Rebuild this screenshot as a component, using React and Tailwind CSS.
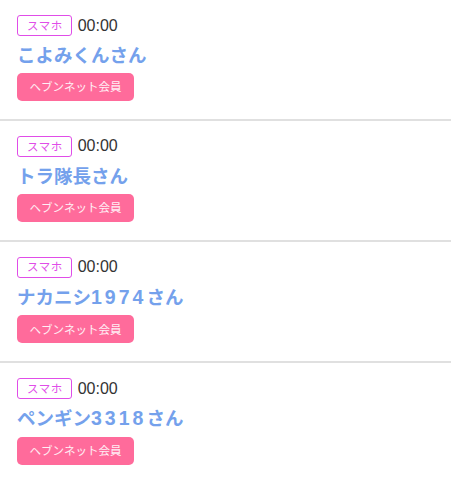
const users = [
  { id: 1, name: 'こよみくんさん', time: '00:00' },
  { id: 2, name: 'トラ隊長さん', time: '00:00' },
  { id: 3, name: 'ナカニシ1974さん', time: '00:00' },
  { id: 4, name: 'ペンギン3318さん', time: '00:00' },
];

// digits in the name are drawn wider than the kana font gives them
function Name({ text }) {
  return text.split(/(\d+)/).map((part, i) =>
    /^\d+$/.test(part)
      ? <span key={i} className="font-['Liberation_Sans',sans-serif] text-[19.5px] tracking-[3px]">{part}</span>
      : <span key={i}>{part}</span>
  );
}

export default function App() {
  return (
    <div className="bg-white min-h-screen font-['Noto_Sans_CJK_JP','Noto_Sans',sans-serif]">
      {users.map(u => (
        <div key={u.id} className="px-[17px] pt-[15px] pb-[18px] border-b-2 border-[#e0e0e0]">
          <div className="flex items-center h-[21px]">
            <span className="flex items-center h-[21px] pl-[9px] pr-[8px] border border-[#e04de8] rounded-[3px] text-[#e04de8] text-[11.5px] tracking-[0.5px] leading-none">スマホ</span>
            <span className="ml-[6px] text-[16px] text-[#333] font-['Liberation_Sans',sans-serif] leading-none">{u.time}</span>
          </div>
          <div className="mt-[4px] text-[18.5px] leading-[28px] font-bold text-[#74a1ec]">
            <Name text={u.name} />
          </div>
          <div className="mt-[4px]">
            <span className="inline-flex items-center justify-center h-[28px] w-[117px] rounded-[5px] bg-[#ff6b9b] text-white/90 text-[11.5px] leading-none">ヘブンネット会員</span>
          </div>
        </div>
      ))}
    </div>
  );
}
